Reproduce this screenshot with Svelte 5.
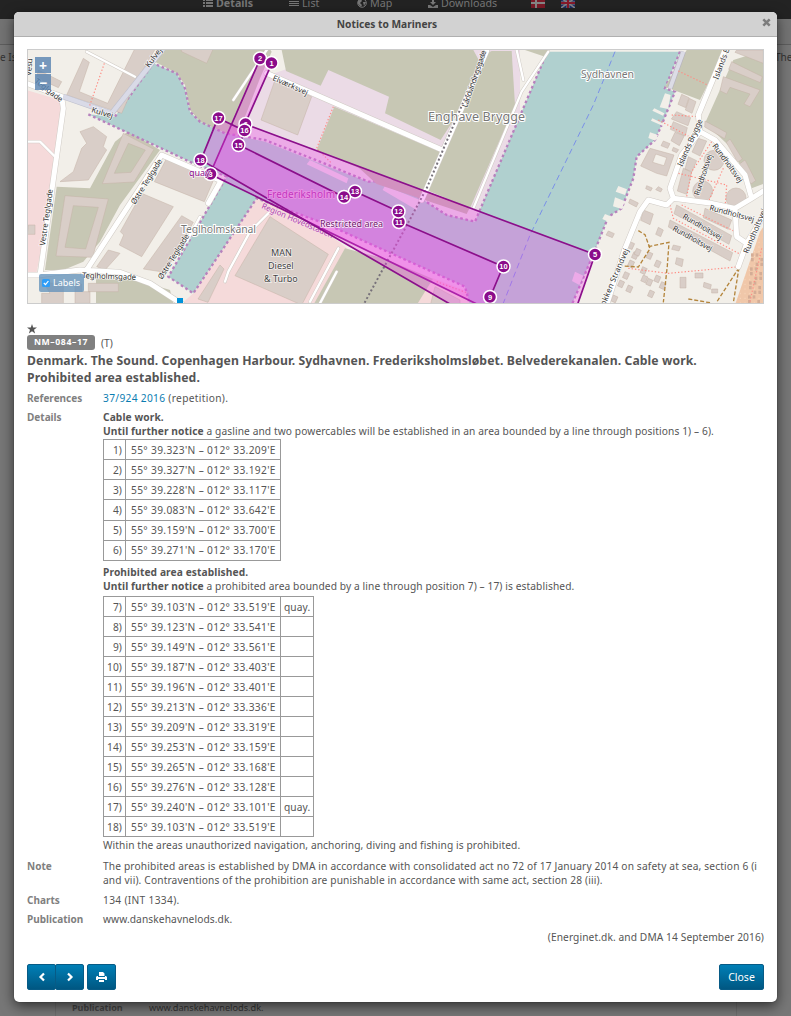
<script>
  const first = ["55° 39.323'N – 012° 33.209'E", "55° 39.327'N – 012° 33.192'E", "55° 39.228'N – 012° 33.117'E", "55° 39.083'N – 012° 33.642'E", "55° 39.159'N – 012° 33.700'E", "55° 39.271'N – 012° 33.170'E"];
  const second = ["55° 39.103'N – 012° 33.519'E", "55° 39.123'N – 012° 33.541'E", "55° 39.149'N – 012° 33.561'E", "55° 39.187'N – 012° 33.403'E", "55° 39.196'N – 012° 33.401'E", "55° 39.213'N – 012° 33.336'E", "55° 39.209'N – 012° 33.319'E", "55° 39.253'N – 012° 33.159'E", "55° 39.265'N – 012° 33.168'E", "55° 39.276'N – 012° 33.128'E", "55° 39.240'N – 012° 33.101'E", "55° 39.103'N – 012° 33.519'E"];
  const pins = [[260, 58.5, '2'], [271.5, 63, '1'], [245.5, 124, '6'], [244.5, 130.5, '16'], [218.5, 118, '17'], [238.5, 145, '15'], [210.5, 174, '3'], [200.5, 160, '18'], [355, 191.5, '13'], [344, 197, '14'], [399, 222, '11'], [398.5, 211.5, '12'], [503.5, 266.5, '10'], [490, 297, '9'], [595, 254.5, '5']];
  const huts = [[345,590],[357,620],[345,645],[330,680],[315,705],[340,720],[383,665],[385,690],[400,700],[425,645],[424,690],[400,620],[295,750],[405,735],[440,710],[365,610]];
  const dots = Array.from({ length: 22 }, (_, i) => [708 + (i % 3) * 14 - Math.floor(i / 6) * 3, 625 + Math.floor(i / 2) * 14]);
</script>

<div class="page">
  <div class="behind">
    <nav>
      <span class="n1"><svg width="10" height="8"><path d="M0 0h2v2H0zM0 3h2v2H0zM0 6h2v2H0zM3 0h7v2H3zM3 3h7v2H3zM3 6h7v2H3z" fill="currentColor"/></svg><b>Details</b></span>
      <span class="n2"><svg width="10" height="8"><path d="M0 0h10v1H0zM0 2h10v1H0zM0 4h10v1H0zM0 6h10v1H0z" fill="currentColor"/></svg>List</span>
      <span class="n3"><svg width="10" height="10"><circle cx="5" cy="5" r="4.3" fill="none" stroke="currentColor"/><path d="M1 3 4 1l1 2-2 2 2 2-1 2-3-3zM6 4l3 0-2 4z" fill="currentColor"/></svg>Map</span>
      <span class="n4"><svg width="10" height="9"><path d="M4 0h2v3h2L5 6 2 3h2zM0 6h2l3 2 3-2h2v3H0z" fill="currentColor"/></svg>Downloads</span>
      <svg class="f1" width="14" height="10"><path d="M0 0h14v10H0z" fill="#7a1a27"/><path d="M0 4h14v2H0zM4 0h2v10H4z" fill="#858585"/></svg>
      <svg class="f2" width="14" height="10"><path d="M0 0h14v10H0z" fill="#1b2c66"/><path d="m0 0 14 10M14 0 0 10" stroke="#858585" stroke-width="1.600"/><path d="M0 3.500h14v3H0zM5.500 0h3v10h-3z" fill="#858585"/><path d="M0 4h14v2H0zM6 0h2v10H6z" fill="#86192a"/></svg>
    </nav>
    <div class="sub"></div>
    <div class="edge"><span>e Isl</span><span>The</span></div>
    <div class="panel"><b>Publication</b><span>www.danskehavnelods.dk.</span></div>
  </div>

  <div class="modal">
    <header><h1>Notices to Mariners</h1><svg class="x" width="9" height="9" viewBox="0 0 9 9"><path d="m1.3 1.3 6.4 6.4m0-6.4L1.3 7.7" stroke="#7c7c7c" stroke-width="2.500"/></svg></header>
    <main>
      <div class="map">
        <svg class="chart" viewBox="28 50 735 253" width="735" height="253">
          <defs>
            <pattern id="trees" width="14" height="14" patternUnits="userSpaceOnUse"><circle cx="4" cy="4" r="1.8" fill="#f8d9bf"/></pattern>
          </defs>
          <rect x="27" y="49" width="740" height="256" fill="#f2efe9"/>
          <g transform="translate(20 45) scale(.333333)">
            <!-- western quarter -->
            <path class="pink" d="M20 135 120 165 130 210 100 440 50 680 20 690Z"/>
            <path class="brown" d="M405 50 440 0H740L755 20 720 100 650 280 540 230 510 195 495 120 470 85Z"/>
            <path class="brown" d="M325 258 420 315 300 480 240 590 190 650 130 675H75L110 425 210 430 285 290Z"/>
            <path class="brown" d="M228 700 350 705 450 735 460 775H228Z"/>
            <path class="pink" d="M710 460 780 490 930 570 1020 640 930 780H480L520 745Z"/>
            <path class="industrial" d="M735 95 1000 0H1500V220L1370 540 1180 485 640 290Z"/>
            <!-- open ground around Enghave Brygge -->
            <path class="brown" d="M785 15H1360L1395 80 1262 285 1095 205 1107 155 925 75 902 122 798 78Z"/>
            <path class="brown" d="M943 185 1260 320 1205 450 890 315Z"/>
            <path class="brown" d="M1390 30 1415 18H1475L1485 180 1350 490 1220 435Z"/>
            <path class="brown" d="M975 610 1090 640 1260 710 1205 780H880Z"/>
            <path class="pink" d="M1240 700 1345 740 1355 780H1190Z"/>
            <!-- water -->
            <path class="water" d="m400 55 70 30 25 45 15 70 30 30 75 35 120 25 190 75 120 45 40 0 110 45 85 55 85 20L1582 20H1980L1935 130 1965 140 1925 240 1905 285 1850 335 1840 400 1805 490 1765 515 1720 628 1655 780H1350L1335 725 925 540 710 460 520 745 445 695 620 395 520 355 205 208 285 215Z"/>
            <g class="quay">
              <path d="M205 208 520 355 620 395 445 695 520 745 710 460 925 540 1335 725 1350 780"/>
              <path d="M285 215 400 55 470 85 495 130 510 200 540 230 615 265 735 285 925 360 1045 410 1085 408 1195 455 1280 510 1365 530 1582 20"/>
              <path d="M1980 20 1935 130 1965 140 1925 240 1905 285 1850 335 1840 400 1805 490 1765 515 1720 628 1655 780"/>
            </g>
            <path d="M1785 20 1720 180 1530 570 1440 800" class="route"/>
            <path fill="#ebdbe8" d="m870 345 115 55-5 15-120-57zM1095 422 1200 465 1190 495 1088 435zM1665 680l25 12-12 28-22-12z"/>

            <!-- buildings, west -->
            <path class="building" fill-rule="evenodd" d="m345 10 62 0-62 105-40 90-165-55 50-110 18 12-30 88 85 35zM55 75l70 35-10 18-65-30zM220 245l40 30-10 30 10 10-55 90-85 5 40-30 25-70 15-15-20-35zM310 265l92 48-60 98-95 5zM325 295l-42 90 50-3 43-67zM135 452l130 10-47 175-110-4zM160 482l-25 125 62 5 38-125zM440 340l145 55-32 75-150-60zM365 445l95 40-95 150-67-35 13-30-10-10zM485 512l35 20-85 150-65-10zM265 615l35 10-45 50-25-10zM600 660l12 12-48 100-30-10zM205 715h90v25h-90zM70 712l60 5v60H65V745h25zM165 717v58h45v-35h-25v-23zM25 540h20v28H22z"/>
            <path class="building" d="m480 0 105 0-25 55-75-35z"/>
            <!-- buildings, centre -->
            <path class="building" d="m765 105 110 50-42 115-110-45zM750 515 925 628 845 780 645 692ZM1245 725l75 40v20h-90z"/>
            <path fill="#c4b6ac" d="m1010 362 340 125-10 20-270-90z"/>
            <!-- eastern quarter -->
            <g transform="translate(1485 0)">
              <path class="brown" d="M515 15H630L555 165 450 125ZM750 15 655 45 570 235 650 310 710 430 750 415ZM30 15h70l-10 20z"/>
              <path fill="#f0c7a9" d="M735 560 660 780H755V530Z"/><path fill="url(#trees)" d="M735 560 660 780H755V530Z"/>
              <path class="road-case narrow" d="M505 20 465 130"/><path d="M505 20 465 130" stroke="#dcdce6" stroke-width="12" fill="none"/>
              <path class="building" fill-rule="evenodd" d="m500 148 22 10-10 30-23-10zM523 160l20 10-12 35-20-10zM485 200l42 18-8 24-50-20zM475 230l42 18-6 25-45-20zM480 262l28 10-15 30-25-15zM445 288l20 8-7 14-20-8zM475 307l16 7-6 9-14-6zM405 310l72 20-22 63-30-8-48-22zM422 327l-9 25 34 10 8-24zM550 280l25 8-20 45-24-12zM520 335l25 12-15 35-20-10zM505 370l25 10-15 68-28-10zM570 228l65 35-6 18-60-35zM645 282l37 60-14 10-34-60zM690 345l32 62-14 10-35-60zM650 50l92 45-6 18-95-40zM625 95l110 40-30 50-18-8 18-30-60-20-10 20-20-10zM665 15h80v40l-85-33zM570 490l80 35-10 28-75-35zM485 480l165 92-8 26-165-92zM465 525l188 98-8 25-185-102zM385 495l30 12-10 32-28-13zM345 462l25 12-6 12-23-12zM395 422l17 7-5 9-15-7zM430 425l12 7-5 9-15-7zM280 558l18 8-6 12-19-8zM430 547l15 8-8 20-15-7zM475 600l22 5-5 13-22-5zM485 638l20 5-4 22-20-8z"/>
              <g class="building"><circle cx="597" cy="346" r="30"/><circle cx="563" cy="438" r="30"/><circle cx="663" cy="459" r="30"/></g>
              {#each huts as h}<rect class="building" x={h[0]} y={h[1]} width="15" height="19" transform="rotate(24 {h[0]} {h[1]})"/>{/each}
              <path class="building" d="M495 697h18v32h-18zM540 684h24v15h-24zM567 712l22 7-3 14-21-7zM590 732h18v12h-18z"/>
              {#each dots as d}<rect x={d[0]} y={d[1]} width="8" height="10" fill="#d4ad96"/>{/each}
              <path fill="#f2efe9" d="m450 145 17 5-8 42-25-5zM418 190l30 15-4 7-32-15zM412 220l35 17-3 6-36-16zM405 262l24 8-8 17-21-8zM310 423l26 10-6 17-28-10zM300 457l30 12-10 23-26-8zM270 507l20 8-10 15-18-8z"/>
              <path class="red-path" d="M490 78 578 120M470 210l80 5M430 225l90 48M590 290l-60 90-20 100M490 385l145 35-5 70M625 370l-45 100M465 480l10 40 205 110M500 480l160 80M340 670l120 15 215-20M740 610l-35 160"/>
              <path class="track" d="M370 557l20 12 15 42-35 55-45-3M400 605l62-13-5 70-12 110M672 668l-68 105M672 668l-17 105M520 762l70 12"/>
            </g>

            <!-- roads -->
            <g class="case"><path d="M20 690H55L180 675 300 682 390 715 490 780M190 690 425 330 603 407 565 475M20 115 125 155 130 190 60 690"/><path class="s" d="M200 20 345 95M20 290H60L105 335M640 165 750 0M540 515 500 590M750 500 690 560 625 680 615 710M870 770 955 610M900 775 950 680"/><path d="M740 85 1267 315M1400 18 1205 465"/><path class="s" d="m1585 20-80 120-145 350M1490 15l20 90"/></g>
            <g class="road"><path d="M20 690H55L180 675 300 682 390 715 490 780M190 690 425 330 603 407 565 475M20 115 125 155 130 190 60 690"/><path class="s" d="M200 20 345 95M20 290H60L105 335M640 165 750 0M540 515 500 590M750 500 690 560 625 680 615 710M870 770 955 610M900 775 950 680"/><path d="M740 85 1267 315M1400 18 1205 465"/><path class="s" d="m1585 20-80 120-145 350M1490 15l20 90"/></g>
            <path d="m130 155 145 50L430 10" fill="none" stroke="#bfc0cd" stroke-width="17"/><path d="m130 155 145 50L430 10" fill="none" stroke="#d9dae7" stroke-width="14"/>
            <g transform="translate(1485 0)"><g class="case"><path d="M630 15 550 210 555 260 500 330 465 430 475 460 590 475 660 490 710 460 750 435M475 460 455 480 400 465 375 500 330 610 275 780M660 490l5 85 30 20 55-90M695 595l-25 70M555 260 600 285 690 390 710 460"/></g><g class="road"><path d="M630 15 550 210 555 260 500 330 465 430 475 460 590 475 660 490 710 460 750 435M475 460 455 480 400 465 375 500 330 610 275 780M660 490l5 85 30 20 55-90M695 595l-25 70M555 260 600 285 690 390 710 460"/></g></g>
            <path class="red-path" d="m253 55-45 130M940 185 890 310l45 45M1200 435l150 55M1250 710l95 35"/>
            <path d="M1395 18 1220 430 1150 560 1030 780" fill="none" stroke="#77717a" stroke-width="6" stroke-dasharray="6 7"/>
          </g>

          <!-- place names below the notice areas -->
          <g class="place"><text x="181" y="233" textLength="75">Teglholmskanal</text><text x="581" y="78" textLength="53">Sydhavnen</text><text x="428" y="121" class="big" textLength="97">Enghave Brygge</text></g>
          <g class="street">
            <text transform="translate(45 246) rotate(-82)" textLength="57">Vestre Teglgade</text><text transform="translate(135 205) rotate(-58)" textLength="52">Østre Teglgade</text><text transform="translate(162 280) rotate(-58)" textLength="52">Østre Teglgade</text>
            <text transform="translate(82 278) rotate(2)" textLength="54">Teglholmsgade</text><text transform="translate(91 112) rotate(17)">Kulvej</text><text transform="translate(149 68) rotate(-53)">Kulvej</text><text transform="translate(34 82) rotate(38)">Teglgade</text><text transform="translate(31 76) rotate(-85)">Vesu</text>
            <text transform="translate(272 80) rotate(24)" textLength="38">Elværksvej</text><text transform="translate(467 108) rotate(-71)" textLength="60">Landvindingsgade</text><text transform="translate(718 80) rotate(-69)">Islands Brygge</text><text transform="translate(682 167) rotate(-66)" textLength="51">Islands Brygge</text>
            <text transform="translate(712 146) rotate(54)" textLength="46">Rundholtsvej</text><text transform="translate(699 196) rotate(-72)" textLength="43">Rundholtsvej</text><text transform="translate(709 210) rotate(15)" textLength="46">Rundholtsvej</text><text transform="translate(682 218) rotate(30)" textLength="44">Rundholtsvej</text><text transform="translate(672 230) rotate(29)" textLength="44">Rundholtsvej</text><text transform="translate(748 254) rotate(-67)">Rundholtsvej</text><text transform="translate(605 306) rotate(-67)" textLength="61">okken Strandvej</text>
            <g class="man"><text x="271" y="256">MAN</text><text x="268" y="269">Diesel</text><text x="264" y="282">&amp; Turbo</text></g>
          </g>
          <g class="region"><text transform="translate(261 208) rotate(23)" textLength="77">Region Hovedstaden</text></g>

          <g class="notice">
            <path d="M272 63 260 59 210 174 563 346 595 254.500 245 124Z"/>
            <path d="m218 118 27 13-6 14 105 52 11-5.500 43.500 20 1.500 10.500 103 44.500-13 31-12 28L507 337 201 160Z"/>
          </g>
          <text class="fred" x="267" y="198" textLength="68">Frederiksholm</text>
          <text class="area" x="320" y="227" textLength="63">Restricted area</text>
          <g class="pins">
            {#each pins as [x, y, n]}<circle cx={x} cy={y} r="6.500"/><text {x} y={y + 2.5}>{n}</text>{/each}
          </g>
          <text class="area quay-name" x="189" y="176">quay</text>
          <path d="M177 298h6v6h-6z" fill="#0092da"/>
        </svg>
        <div class="zoom"><span>+</span><span>−</span></div>
        <div class="labels"><svg width="8" height="8"><rect width="8" height="8" rx="1.500" fill="#2e9df7"/><path d="m1.800 4 1.700 1.700L6.400 2" fill="none" stroke="#fff" stroke-width="1.200"/></svg>Labels</div>
      </div>

      <svg class="star" width="10" height="10" viewBox="0 0 10 10"><path d="M5 0 6.200 3.500H10L7 5.700 8.100 9.500 5 7.200 1.900 9.500 3 5.700 0 3.500h3.800z" fill="#555"/></svg>
      <div class="id"><span class="badge">NM–084–17</span><span>(T)</span></div>
      <h2>Denmark. The Sound. Copenhagen Harbour. Sydhavnen. Frederiksholmsløbet. Belvederekanalen. Cable work.<br>Prohibited area established.</h2>

      <dl>
        <dt>References</dt><dd class="ref"><a href="#ref">37/924 2016</a> (repetition).</dd>
        <dt>Details</dt>
        <dd class="details">
          <p><b>Cable work.</b></p>
          <p><b>Until further notice</b> a gasline and two powercables will be established in an area bounded by a line through positions 1) – 6).</p>
          <table class="a"><tbody>{#each first as p, i}<tr><td class="no">{i + 1})</td><td class="pos">{p}</td></tr>{/each}</tbody></table>
          <p class="gap"><b>Prohibited area established.</b></p>
          <p><b>Until further notice</b> a prohibited area bounded by a line through position 7) – 17) is established.</p>
          <table class="b"><tbody>{#each second as p, i}<tr><td class="no">{i + 7})</td><td class="pos">{p}</td><td class="rem">{i === 0 || i === 10 ? 'quay.' : ''}</td></tr>{/each}</tbody></table>
          <p class="within">Within the areas unauthorized navigation, anchoring, diving and fishing is prohibited.</p>
        </dd>
        <dt>Note</dt><dd class="note"><p>The prohibited areas is established by DMA in accordance with consolidated act no 72 of 17 January 2014 on safety at sea, section 6 (i</p><p>and vii). Contraventions of the prohibition are punishable in accordance with same act, section 28 (iii).</p></dd>
        <dt>Charts</dt><dd class="charts">134 (INT 1334).</dd>
        <dt>Publication</dt><dd>www.danskehavnelods.dk.</dd>
      </dl>
      <div class="source">(Energinet.dk. and DMA 14 September 2016)</div>
    </main>
    <footer>
      <div class="group"><button aria-label="Previous"><svg width="8" height="10"><path d="M6 1.500 2.500 5 6 8.500" fill="none" stroke="#fff" stroke-width="2.200"/></svg></button><button aria-label="Next"><svg width="8" height="10"><path d="M2 1.500 5.500 5 2 8.500" fill="none" stroke="#fff" stroke-width="2.200"/></svg></button></div>
      <button class="print" aria-label="Print"><svg width="11" height="10"><path d="M3 0h4l1.500 1.500V4H3zM1 4h1v1h7V4h1l1 1v3H9V7H2v1H0V5zM3 8h5v2H3z" fill="#fff"/></svg></button>
      <button class="close">Close</button>
    </footer>
  </div>
</div>

<style>
  :global(body) { margin: 0; overflow: hidden; }
  * { box-sizing: border-box; }
  .page { position: relative; width: 791px; height: 1016px; overflow: hidden; background: #777; font: 10.2px/14px "Noto Sans", "Open Sans", sans-serif; color: #555; }
  .behind { height: 1016px; display: flex; flex-direction: column; color: #333; }
  nav { position: relative; height: 19px; flex: none; background: #232323; color: #777; font-size: 10.7px; letter-spacing: .02px; }
  nav span, nav > svg { position: absolute; top: -4px; display: flex; align-items: center; gap: 3px; white-space: nowrap; }
  .n1 { left: 203px; } .n2 { left: 289px; } .n3 { left: 357px; } .n4 { left: 428px; }
  nav > svg.f1 { left: 531px; top: -2px; } nav > svg.f2 { left: 561px; top: -2px; }
  .sub { height: 26px; flex: none; background: #737373; border-bottom: 1px solid #5d5d5d; }
  .edge { display: flex; justify-content: space-between; padding: 5px 1px 0 0; font-size: 10px; flex: 1; }
  .edge span:last-child { width: 15px; }
  .panel { width: 682px; height: 30px; margin-left: 55px; padding: 15px 16px 0; display: flex; border: solid #6c6c6c; border-width: 0 1px; font-size: 9.2px; }
  .panel b { width: 77px; color: #444; font-size: 9px; }
  .modal { position: absolute; left: 14px; top: 12px; width: 763px; height: 990px; border-radius: 5px; background: #fff; box-shadow: 0 4px 13px rgba(0,0,0,.6), 0 0 1px #222; display: flex; flex-direction: column; }
  header { height: 25px; flex: none; background: #d2d2d2; border-bottom: 1px solid #b0b0b0; border-radius: 5px 5px 0 0; display: flex; align-items: center; padding: 0 6px 0 15px; }
  h1 { flex: 1; margin: 0; text-align: center; font-size: 10.2px; line-height: 24px; color: #444; padding-right: 17px; }
  .x { margin-top: -3px; }
  main { padding: 12px 13px 0; flex: 1; }
  .map { position: relative; width: 737px; height: 255px; border: 1px solid #ccc; }
  .chart { display: block; }
  .pink { fill: #f5dada; } .brown { fill: #c7c7b4; } .industrial { fill: #ebdbe6; } .water { fill: #b0d0cf; }
  .building { fill: #d9cec8; stroke: #c4b2a6; stroke-width: 1.5; }
  .quay { fill: none; stroke: #b782bd; stroke-width: 7; stroke-dasharray: 8 8; }
  .route { fill: none; stroke: #7990e8; stroke-width: 3; stroke-dasharray: 18 11; }
  .case, .road { fill: none; stroke: #d0cbc5; stroke-width: 18; stroke-linejoin: round; stroke-linecap: round; }
  .road { stroke: #fff; stroke-width: 15; } .case .s { stroke-width: 10; } .road .s { stroke-width: 7; }
  .road-case { fill: none; stroke: #b7b4bd; stroke-width: 16; }
  .red-path { fill: none; stroke: #ff8c84; stroke-width: 3.5; stroke-dasharray: 4 6; }
  .track { fill: none; stroke: #b4853c; stroke-width: 4; stroke-dasharray: 12 6; }
  .place text { font-size: 10.5px; fill: #777; stroke: #fff; stroke-width: 2px; paint-order: stroke; }
  .place .big { font-size: 12.5px; }
  .street text { font-size: 7.8px; fill: #333; stroke: #ffffffb0; stroke-width: 1.5px; paint-order: stroke; }
  .street .man text { font-size: 9px; fill: #444; }
  .region text { font-size: 8px; fill: #ac46ac; stroke: #f9dcea; stroke-width: 1px; paint-order: stroke; }
  .notice path { fill: rgb(240 70 235 / .33); stroke: #8b0f8b; stroke-width: 1.7; }
  .fred { font-size: 10px; fill: #c238be; stroke: #ee91e6; stroke-width: 1.5px; paint-order: stroke; }
  .area { font-size: 9px; fill: #73106e; stroke: #ffffffd0; stroke-width: 1.5px; paint-order: stroke; }
  .quay-name { fill: #8b0c8b; }
  .pins circle { fill: #8b0c8b; stroke: #fff; stroke-width: 1.5; }
  .pins text { fill: #fff; font: bold 7.5px "Liberation Sans", sans-serif; text-anchor: middle; }
  .zoom { position: absolute; left: 7px; top: 7px; width: 16px; display: grid; gap: 1px; }
  .zoom span { height: 16px; background: rgb(90 133 178 / .82); color: #fff; font: bold 14px/18px "Noto Sans", sans-serif; text-align: center; }
  .labels { position: absolute; left: 11px; top: 224px; width: 45px; height: 18px; border-radius: 2px; background: rgb(100 146 187 / .78); color: #fff; font-size: 9px; display: flex; align-items: center; gap: 3px; padding-left: 3px; }
  .star { display: block; margin: 20px 0 0; }
  .id { display: flex; gap: 6px; height: 15px; margin-top: 1px; align-items: center; }
  .badge { width: 68px; height: 15px; border-radius: 3px; background: #808080; color: #fff; font-size: 8.7px; font-weight: 700; line-height: 15px; text-align: center; letter-spacing: .6px; }
  h2 { margin: 2px 0 0; font-size: 12.2px; line-height: 17px; letter-spacing: .09px; white-space: nowrap; }
  dl { margin: 5px 0 0; display: grid; grid-template-columns: 76px 1fr; row-gap: 5px; letter-spacing: .1px; }
  dt { font-weight: 700; color: #808080; font-size: 10px; letter-spacing: 0; } dd, p { margin: 0; white-space: nowrap; }
  a { color: #0a7cb1; text-decoration: none; }
  table { border-collapse: collapse; table-layout: fixed; margin-top: 1px; }
  .a { width: 178px; height: 122px; } .b { width: 211px; height: 241px; margin-top: 3px; }
  td { border: 1px solid #999; padding: 0 3px; line-height: 18px; }
  .no { width: 22px; text-align: right; padding-left: 0; } .pos { width: 155px; padding-left: 5px; padding-right: 0; letter-spacing: .34px; } .rem { width: 33px; }
  .gap { margin-top: 4px; } .within { margin: 1px 0 2px; }
  .ref, .charts { letter-spacing: .32px; } .note { letter-spacing: .15px; padding-bottom: 1px; }
  .source { text-align: right; margin-top: 4px; letter-spacing: .1px; }
  footer { height: 38px; padding: 0 13px; display: flex; gap: 3px; flex: none; }
  .group { display: flex; }
  button { width: 29px; height: 26px; border: 1px solid #075b86; background: linear-gradient(#007fb6, #005782); border-radius: 2px; color: #fff; font: 10.5px "Noto Sans", sans-serif; padding: 0; display: flex; align-items: center; justify-content: center; }
  .group button + button { margin-left: -1px; }
  .close { width: 45px; margin-left: auto; }
</style>
